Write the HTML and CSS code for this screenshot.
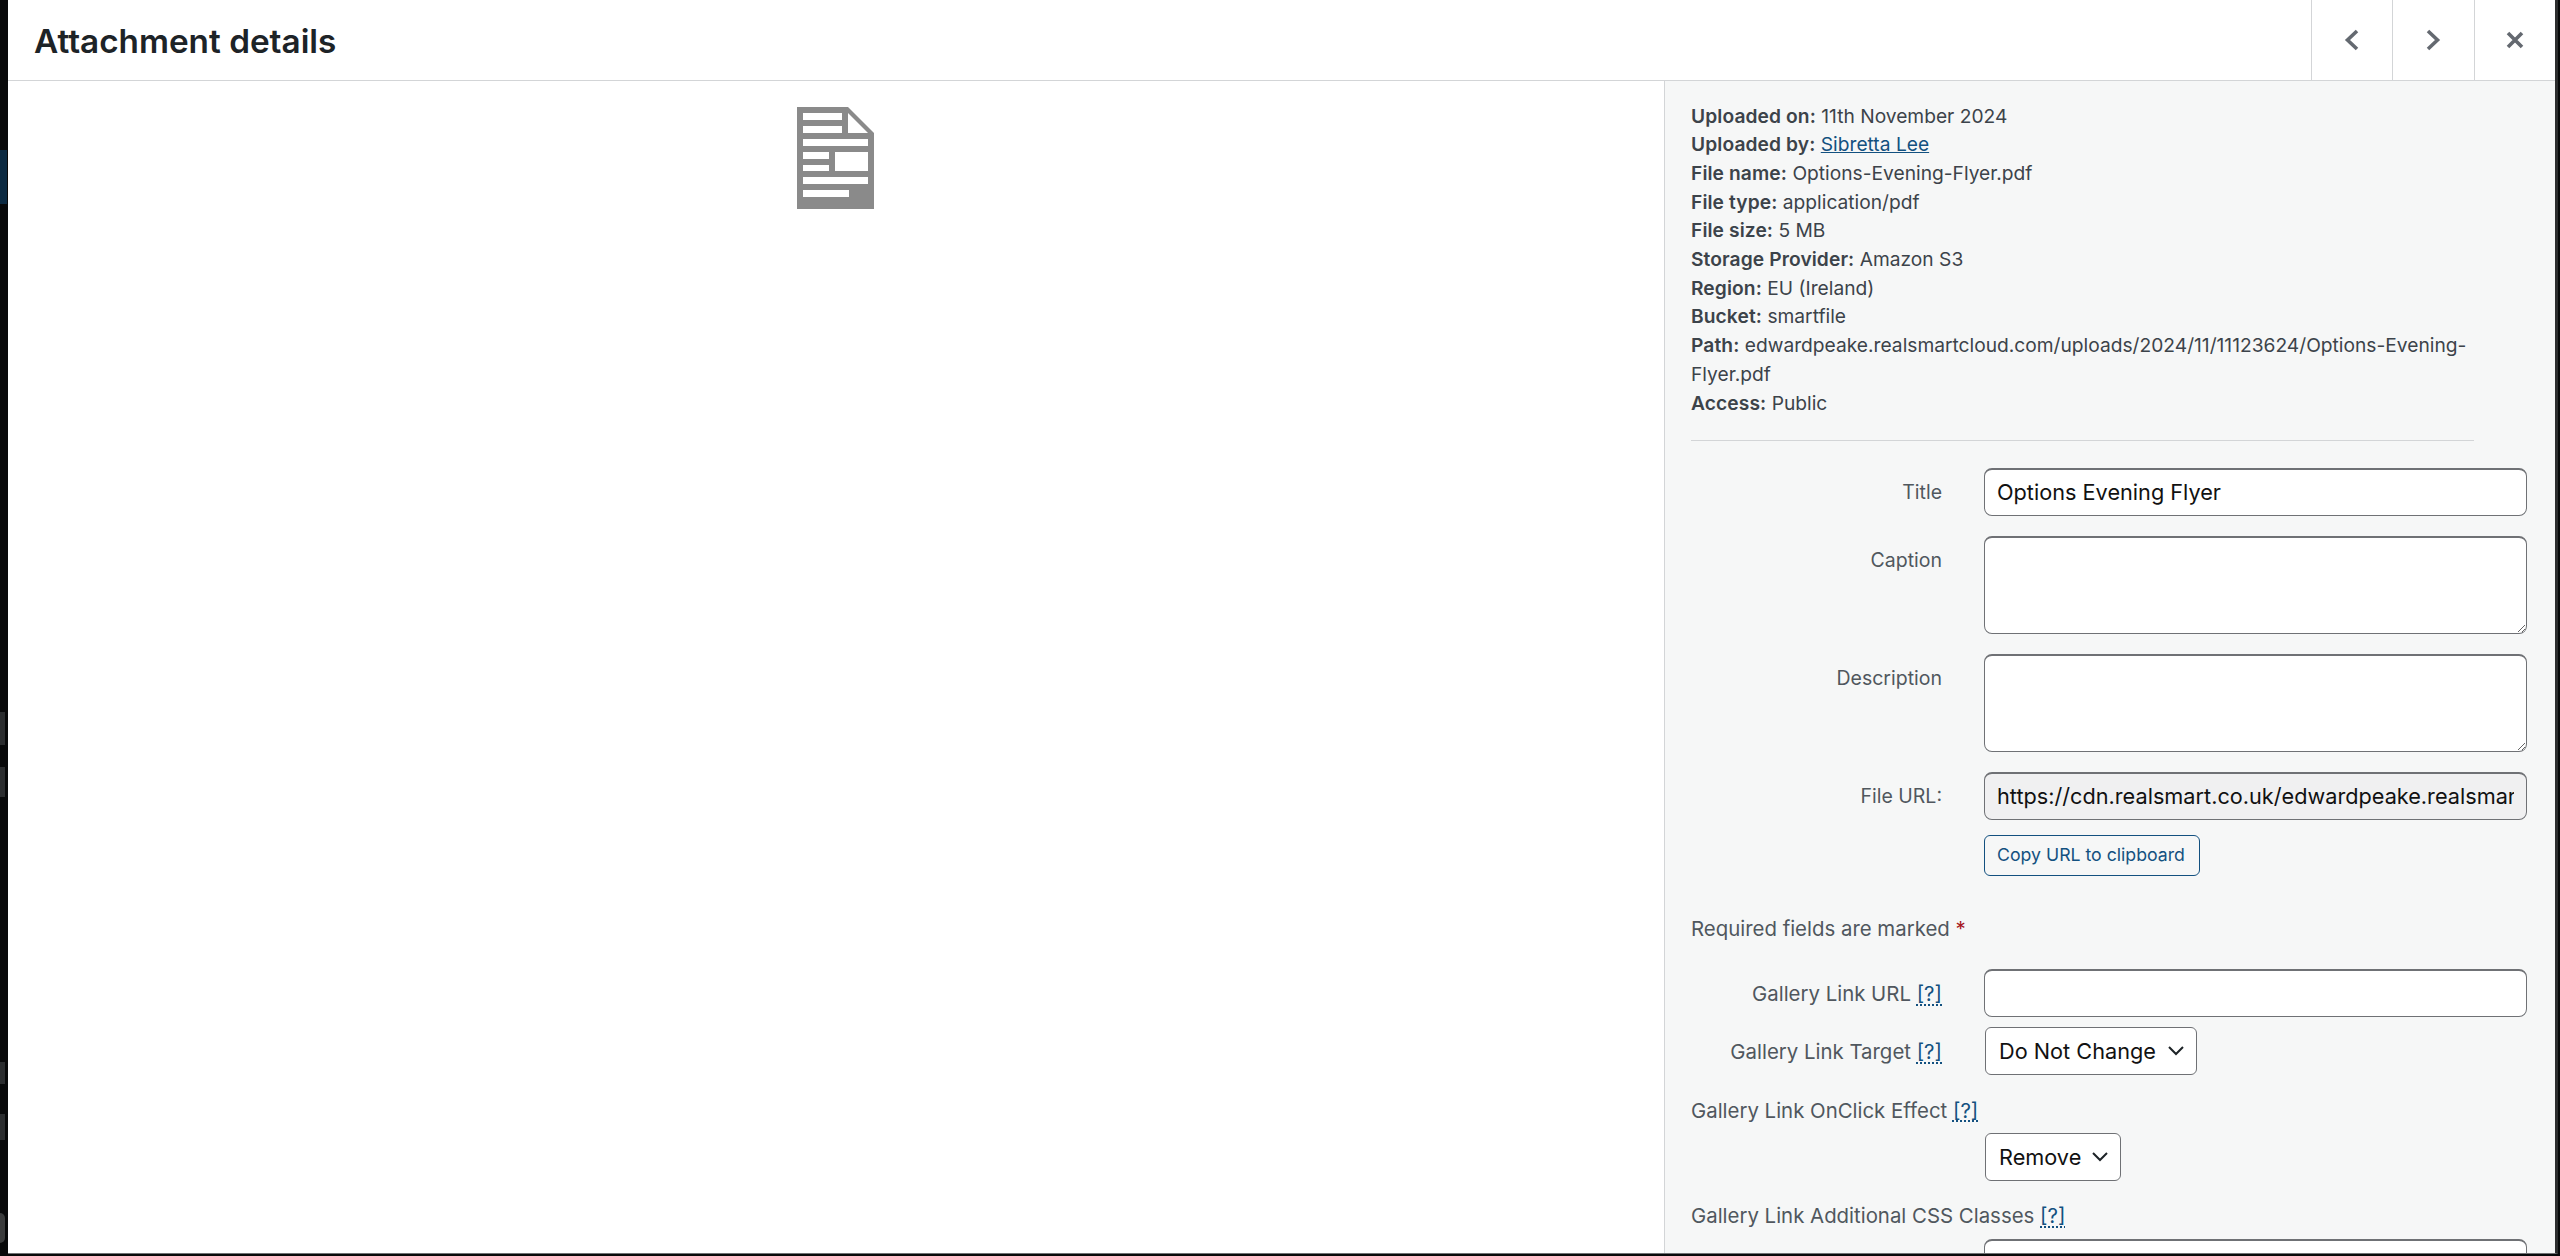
FILE: index.html
```html
<!DOCTYPE html>
<html lang="en">
<head>
<meta charset="utf-8">
<title>Attachment details</title>
<link rel="stylesheet" href="styles.css">
</head>
<body>
<div class="behind" aria-hidden="true">
  <span class="blip blip-blue"></span>
  <span class="blip blip-a"></span>
  <span class="blip blip-b"></span>
  <span class="blip blip-c"></span>
  <span class="blip blip-d"></span>
  <span class="blip blip-avatar"></span>
</div>
<div class="modal">
  <header class="head">
    <h1 class="title">Attachment details</h1>
    <div class="nav">
      <button class="nav-btn" aria-label="Previous"><svg width="40" height="40" viewBox="0 0 40 40"><path d="M25 11 L15.5 20 L25 29" class="ico"/></svg></button>
      <button class="nav-btn" aria-label="Next"><svg width="40" height="40" viewBox="0 0 40 40"><path d="M15 11 L24.5 20 L15 29" class="ico"/></svg></button>
      <button class="nav-btn" aria-label="Close"><svg width="40" height="40" viewBox="0 0 40 40"><path d="M13 13 L27 27 M27 13 L13 27" class="ico"/></svg></button>
    </div>
  </header>
  <div class="body">
    <main class="preview">
      <svg class="doc" width="77" height="102" viewBox="0 0 77 102">
        <path fill-rule="evenodd" fill="#8a8a8a" d="M0 0H51L77 26V102H0Z
          M6 6V13H45V6Z M6 19V26H45V19Z M51 6V26H71Z
          M6 32V39H71V32Z M6 45V52H32V45Z M38 45V64H71V45Z M6 58V64H32V58Z
          M6 70V77H71V70Z M6 83V90H52V83Z"/>
      </svg>
    </main>
    <aside class="side">
      <div class="details">
        <div><strong>Uploaded on:</strong> 11th November 2024</div>
        <div><strong>Uploaded by:</strong> <a href="#">Sibretta Lee</a></div>
        <div><strong>File name:</strong> Options-Evening-Flyer.pdf</div>
        <div><strong>File type:</strong> application/pdf</div>
        <div><strong>File size:</strong> 5 MB</div>
        <div><strong>Storage Provider:</strong> Amazon S3</div>
        <div><strong>Region:</strong> EU (Ireland)</div>
        <div><strong>Bucket:</strong> smartfile</div>
        <div><strong>Path:</strong> edwardpeake.realsmartcloud.com/uploads/2024/11/11123624/Options-Evening-Flyer.pdf</div>
        <div><strong>Access:</strong> Public</div>
      </div>
      <form class="form">
        <label class="row row-title"><span class="lab">Title</span><input class="field" type="text" value="Options Evening Flyer"></label>
        <label class="row row-area"><span class="lab lab-top">Caption</span><textarea class="field area"></textarea></label>
        <label class="row row-area"><span class="lab lab-top">Description</span><textarea class="field area"></textarea></label>
        <label class="row row-area"><span class="lab">File URL:</span><input class="field field-ro" type="text" readonly value="https://cdn.realsmart.co.uk/edwardpeake.realsmartcloud.com/uploads/2024/11/11123624/Options-Evening-Flyer.pdf"></label>
        <div class="row row-copy"><span></span><button type="button" class="copy">Copy URL to clipboard</button></div>
        <p class="req">Required fields are marked <span class="star">*</span></p>
        <label class="row row-url"><span class="lab lab-wide">Gallery Link URL <a href="#" class="help">[?]</a></span><input class="field" type="text"></label>
        <label class="row row-target"><span class="lab lab-wide">Gallery Link Target <a href="#" class="help">[?]</a></span><select class="sel sel-target"><option>Do Not Change</option></select></label>
        <p class="free free-click">Gallery Link OnClick Effect <a href="#" class="help">[?]</a></p>
        <div class="row row-remove"><span></span><select class="sel sel-remove"><option>Remove</option></select></div>
        <p class="free free-css">Gallery Link Additional CSS Classes <a href="#" class="help">[?]</a></p>
        <div class="row row-last"><span></span><input class="field" type="text"></div>
      </form>
    </aside>
  </div>
</div>
</body>
</html>
```

FILE: styles.css
```css
* { box-sizing: border-box; }
html, body { height: 100%; margin: 0; }
body {
  position: relative;
  background: #08090a;
  padding: 0 5px 2px 8px;
  overflow: hidden;
  font-family: Inter, "Liberation Sans", sans-serif;
  font-size: 19.2px;
  line-height: 28.7px;
  color: #3c434a;
}
.behind { position: absolute; left: 0; top: 0; width: 8px; height: 100%; }
.blip { position: absolute; left: 0; width: 5px; background: #2b2d2f; }
.blip-blue { top: 150px; height: 54px; width: 7px; background: #0c2a42; }
.blip-a { top: 712px; height: 33px; }
.blip-b { top: 767px; height: 30px; }
.blip-c { top: 1062px; height: 22px; }
.blip-d { top: 1114px; height: 26px; }
.blip-avatar { top: 1213px; height: 30px; border-radius: 0 15px 15px 0; background: #3a3b3c; }
.modal {
  position: relative;
  height: 100%;
  background: #fff;
  display: flex;
  flex-direction: column;
  overflow: hidden;
  border-bottom: 1px solid #6f7173;
  border-right: 3px solid #2c2d2e;
  margin-right: -3px;
}
.head {
  height: 81px;
  flex: none;
  display: flex;
  justify-content: space-between;
  border-bottom: 1px solid #d3d5d7;
}
.title {
  margin: 0;
  padding-left: 26px;
  font-size: 33.3px;
  line-height: 82px;
  font-weight: 600;
  color: #1d2327;
}
.nav { display: flex; }
.nav-btn {
  width: 81.5px;
  padding: 0;
  background: #fff;
  border: 0;
  border-left: 1px solid #d3d5d7;
  display: flex;
  align-items: center;
  justify-content: center;
}
.ico { fill: none; stroke: #646970; stroke-width: 3.6; }
.body { flex: 1; display: flex; min-height: 0; }
.preview {
  flex: 1;
  display: flex;
  justify-content: center;
  align-items: flex-start;
  padding: 26px 1px 0 0;
}
.doc { display: block; }
.side {
  flex: none;
  width: 891px;
  background: #f6f7f7;
  border-left: 1px solid #d3d5d7;
  padding: 20.5px 27px 0 26px;
  overflow: hidden;
}
.details {
  width: 783px;
  padding-bottom: 22.5px;
  border-bottom: 1px solid #d3d5d7;
}
.details strong { font-weight: 600; letter-spacing: 0.1px; }
a { color: #135180; }
.form { margin-top: 27px; }
.row {
  display: grid;
  grid-template-columns: 251px 543px;
  column-gap: 42px;
  align-items: center;
}
.lab { text-align: right; color: #50575e; font-size: 19.5px; position: relative; top: 1px; }
.lab-top { align-self: start; padding-top: 9px; }
.lab-wide { font-size: 20.4px; white-space: nowrap; }
.field {
  display: block;
  width: 100%;
  height: 48px;
  padding: 0 12px;
  border: 1.5px solid #6f7175;
  border-top-width: 2px;
  border-radius: 8px;
  background: #fff;
  font: 21.7px/28px Inter, "Liberation Sans", sans-serif;
  color: #111;
}
.field-ro { background: #f0f0f1; }
.area { height: 98px; }
.row-area { margin-top: 20px; }
.row-copy { margin-top: 15px; }
.copy {
  justify-self: start;
  width: 216px;
  height: 41px;
  padding: 0 2px 0 0;
  background: #f6f7f7;
  border: 1.5px solid #135180;
  border-radius: 6px;
  font: 17.7px/1 Inter, "Liberation Sans", sans-serif;
  color: #135180;
}
.req { margin: 39px 0 26px; color: #50575e; font-size: 20.4px; }
.star { color: #a7191f; }
.help { text-decoration: underline dotted; text-underline-offset: 3px; }
.row-target { margin-top: 10px; }
.sel {
  appearance: none;
  justify-self: start;
  margin-left: 1px;
  height: 48px;
  padding: 0 34px 0 13px;
  border: 1.5px solid #6f7175;
  border-radius: 6px;
  background: #fff url("data:image/svg+xml,%3Csvg xmlns='http://www.w3.org/2000/svg' width='18' height='12' viewBox='0 0 18 12'%3E%3Cpath d='M2 2l7 7 7-7' fill='none' stroke='%231d2327' stroke-width='2'/%3E%3C/svg%3E") no-repeat right 11px center;
  font: 21.7px/28px Inter, "Liberation Sans", sans-serif;
  color: #111;
}
.sel-target { width: 212px; }
.sel-remove { width: 136px; }
.free { margin: 0; color: #50575e; font-size: 20.4px; }
.free-click { margin-top: 21.5px; }
.row-remove { margin-top: 7px; }
.free-css { margin-top: 21.5px; }
.row-last { margin-top: 8px; }
```
